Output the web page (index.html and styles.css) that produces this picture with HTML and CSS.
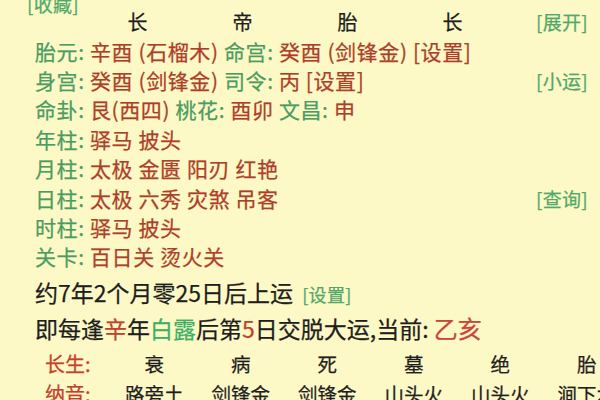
FILE: index.html
```html
<!DOCTYPE html>
<html lang="zh">
<head>
<meta charset="utf-8">
<link rel="stylesheet" href="styles.css">
</head>
<body>
<div class="page">
  <div class="top">
    <span class="btn fav">[收藏]</span>
    <span class="cut cut1">戊午年</span>
    <span class="cut cut2">丙寅时</span>
  </div>
  <div class="pillars">
    <div class="cells">
      <span>长</span><span>帝</span><span>胎</span><span>长</span>
    </div>
    <span class="btn">[展开]</span>
  </div>
  <div class="info">
    <div class="row"><span><b class="lb">胎元: </b><i class="v">辛酉 (石榴木) </i><b class="lb">命宫: </b><i class="v">癸酉 (剑锋金) [设置]</i></span></div>
    <div class="row"><span><b class="lb">身宫: </b><i class="v">癸酉 (剑锋金) </i><b class="lb">司令: </b><i class="v">丙 [设置]</i></span><span class="btn">[小运]</span></div>
    <div class="row"><span><b class="lb">命卦: </b><i class="v">艮(西四) </i><b class="lb">桃花: </b><i class="v">酉卯 </i><b class="lb">文昌: </b><i class="v">申</i></span></div>
    <div class="row"><span><b class="lb">年柱: </b><i class="v">驿马 披头</i></span></div>
    <div class="row"><span><b class="lb">月柱: </b><i class="v">太极 金匮 阳刃 红艳</i></span></div>
    <div class="row"><span><b class="lb">日柱: </b><i class="v">太极 六秀 灾煞 吊客</i></span><span class="btn">[查询]</span></div>
    <div class="row"><span><b class="lb">时柱: </b><i class="v">驿马 披头</i></span></div>
    <div class="row"><span><b class="lb">关卡: </b><i class="v">百日关 烫火关</i></span></div>
  </div>
  <div class="luck">约7年2个月零25日后上运 <span class="btn small">[设置]</span></div>
  <div class="luck">即每逢<span class="r">辛</span>年<span class="g">白露</span>后第<span class="r">5</span>日交脱大运,当前: <span class="cur">乙亥</span></div>
  <div class="table">
    <span class="tl">长生:</span><span>衰</span><span>病</span><span>死</span><span>墓</span><span>绝</span><span>胎</span>
    <span class="tl">纳音:</span><span>路旁土</span><span>剑锋金</span><span>剑锋金</span><span>山头火</span><span>山头火</span><span>涧下水</span>
  </div>
</div>
</body>
</html>
```

FILE: styles.css
```css
html, body {
  margin: 0;
  padding: 0;
  width: 600px;
  height: 400px;
  overflow: hidden;
  background: #fdf9c6;
}
.page {
  font-family: "Noto Sans CJK SC", "Noto Sans", sans-serif;
  color: #1e1e1e;
  padding: 0 12px 0 35px;
  -webkit-text-stroke: 0.25px currentColor;
}
b, i { font-weight: normal; font-style: normal; }
.lb { color: #4a9c63; }
.v { color: #ad3f2a; }
.btn { color: #52a86b; font-size: 19px; letter-spacing: 0.3px; }
.top {
  height: 12px;
  display: flex;
  align-items: flex-end;
  font-size: 19px;
  line-height: 20px;
}
.fav { margin-left: -8px; margin-bottom: -2px; }
.cut { color: #555; margin-bottom: 13px; }
.cut1 { margin-left: 42px; }
.cut2 { margin-left: 250px; }
.pillars {
  height: 20px;
  display: flex;
  align-items: center;
  justify-content: space-between;
  font-size: 20px;
  line-height: 20px;
}
.cells {
  flex: none;
  display: grid;
  grid-template-columns: repeat(4, 105px);
  margin-left: 50px;
  justify-items: center;
}
.info {
  padding-top: 4.7px;
  font-size: 21px;
  letter-spacing: 0.6px;
}
.row {
  height: 29.4px;
  line-height: 29.4px;
  display: flex;
  justify-content: space-between;
  white-space: pre;
}
.row .btn { letter-spacing: 0.3px; }
.luck {
  font-size: 23px;
  line-height: 35px;
  height: 35px;
  white-space: pre;
}
.info + .luck { margin-top: 3px; }
.luck .small { font-size: 18px; margin-left: 4px; }
.luck .r { color: #c4402c; }
.luck .g { color: #3fae66; }
.luck .cur { color: #c8463a; font-size: 24px; }
.table {
  margin-top: 4px;
  margin-left: 10px;
  display: grid;
  grid-template-columns: 66px repeat(6, 86.5px);
  grid-auto-rows: 30px;
  line-height: 30px;
  font-size: 19.5px;
  justify-items: center;
  white-space: nowrap;
}
.table .tl { color: #c4402c; justify-self: start; font-size: 20px; }
```
